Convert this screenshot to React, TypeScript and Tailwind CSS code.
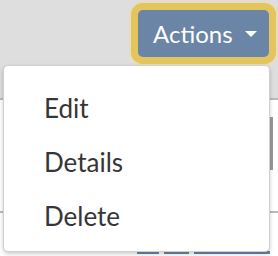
import React from "react";

const items = ["Edit", "Details", "Delete"];

export default function App() {
  return (
    <div
      className="relative w-[278px] h-[256px] overflow-hidden bg-white"
      style={{ fontFamily: "Lato, 'Open Sans', sans-serif" }}
    >
      {/* page behind the dropdown */}
      <div className="flex flex-col">
        <div className="h-[100px] bg-[#dedede] border-b-2 border-[#b9b9b9] flex justify-end items-start pt-[10px] pr-[9px]">
          <button className="h-[47px] w-[131px] rounded-[5px] bg-[#6b85a6] text-white text-[24px] flex items-center pl-[15px] pr-[15px] shadow-[0_0_0_7px_#e4c55d,0_0_2px_8px_#efdd9f]">
            <span>Actions</span>
            <span className="ml-[12px] w-0 h-0 border-l-[6px] border-r-[6px] border-t-[6px] border-l-transparent border-r-transparent border-t-white" />
          </button>
        </div>
        <div className="h-[113px] border-b-2 border-[#b9b9b9] flex justify-end pt-[17px]">
          <div className="w-[3px] h-[53px] bg-[#9a9a9a] mr-[5px]" />
        </div>
        <div className="h-[41px] flex justify-end items-end gap-[5px] pr-[8px]">
          <div className="w-[22px] h-[3px] bg-[#6b85a6]" />
          <div className="w-[25px] h-[3px] bg-[#6b85a6]" />
          <div className="w-[76px] h-[3px] bg-[#6b85a6]" />
        </div>
      </div>

      {/* dropdown menu */}
      <div className="absolute left-[3px] top-[65px] w-[267px] h-[187px] bg-white rounded-[5px] border border-[#d0d0d0] shadow-[0_2px_4px_rgba(0,0,0,0.2)] pt-[16px]">
        {items.map((item) => (
          <div key={item} className="h-[54px] leading-[53px] pl-[40px] text-[26px] text-[#363636]">
            {item}
          </div>
        ))}
      </div>
    </div>
  );
}
